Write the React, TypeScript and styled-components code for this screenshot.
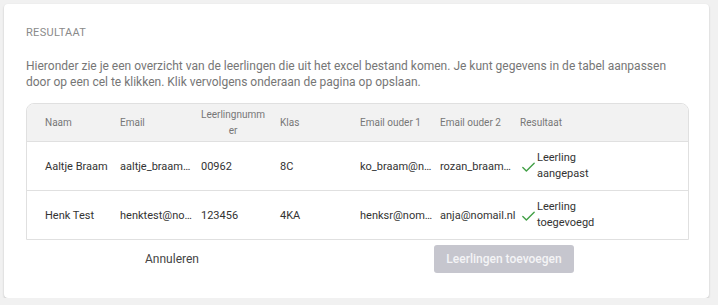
import React from 'react'
import styled, { createGlobalStyle } from 'styled-components'
import { Check } from 'lucide-react'

const GlobalStyle = createGlobalStyle`
    html, body {
        margin: 0;
        padding: 0;
        background: #f1f1f1;
        font-family: Roboto, "Liberation Sans", Arial, sans-serif;
    }
`

interface StudentRow {
    naam: string;
    email: string;
    nummer: string;
    klas: string;
    ouder1: string;
    ouder2: string;
    resultaat: string;
}

const rows: StudentRow[] = [
    {
        naam: 'Aaltje Braam',
        email: 'aaltje_braam@nomail.nl',
        nummer: '00962',
        klas: '8C',
        ouder1: 'ko_braam@nomail.nl',
        ouder2: 'rozan_braam@nomail.nl',
        resultaat: 'Leerling aangepast',
    },
    {
        naam: 'Henk Test',
        email: 'henktest@nomail.nl',
        nummer: '123456',
        klas: '4KA',
        ouder1: 'henksr@nomail.nl',
        ouder2: 'anja@nomail.nl',
        resultaat: 'Leerling toegevoegd',
    },
]

const columnWidths = [89, 81, 79, 80, 80, 80]

export default function App() {
    return (
        <>
            <GlobalStyle />
            <Card>
                <Title>Resultaat</Title>
                <Intro>
                    Hieronder zie je een overzicht van de leerlingen die uit het excel bestand komen. Je kunt gegevens in de tabel aanpassen
                    door op een cel te klikken. Klik vervolgens onderaan de pagina op opslaan.
                </Intro>
                <TableWrap>
                    <Table>
                        <colgroup>
                            {columnWidths.map((w, i) => <col key={i} style={{ width: w }} />)}
                            <col />
                        </colgroup>
                        <thead>
                            <tr>
                                <HeadCell>Naam</HeadCell>
                                <HeadCell>Email</HeadCell>
                                <HeadCell><Wrapped>Leerlingnummer</Wrapped></HeadCell>
                                <HeadCell>Klas</HeadCell>
                                <HeadCell>Email ouder 1</HeadCell>
                                <HeadCell>Email ouder 2</HeadCell>
                                <HeadCell>Resultaat</HeadCell>
                            </tr>
                        </thead>
                        <tbody>
                            {rows.map((row) => (
                                <tr key={row.naam}>
                                    <Cell>{row.naam}</Cell>
                                    <Cell>{row.email}</Cell>
                                    <Cell>{row.nummer}</Cell>
                                    <Cell>{row.klas}</Cell>
                                    <Cell>{row.ouder1}</Cell>
                                    <Cell>{row.ouder2}</Cell>
                                    <Cell>
                                        <Result>
                                            <Check size={17} color="#43a047" strokeWidth={2} />
                                            <ResultText>{row.resultaat}</ResultText>
                                        </Result>
                                    </Cell>
                                </tr>
                            ))}
                        </tbody>
                    </Table>
                </TableWrap>
                <Footer>
                    <CancelButton>Annuleren</CancelButton>
                    <SubmitButton disabled>Leerlingen toevoegen</SubmitButton>
                </Footer>
            </Card>
        </>
    )
}

const Card = styled.div`
    margin: 4px 9px 0 4px;
    height: 294px;
    box-sizing: border-box;
    padding: 22px 20px 0 22px;
    background: #fff;
    border-radius: 4px;
    box-shadow: 0 1px 2px rgba(0, 0, 0, 0.22);
`

const Title = styled.div`
    font-size: 11px;
    line-height: 14px;
    color: #8a8a8a;
    text-transform: uppercase;
    letter-spacing: 0.3px;
`

const Intro = styled.p`
    margin: 18px 0 0;
    font-size: 12px;
    line-height: 16px;
    color: #767676;
`

const TableWrap = styled.div`
    margin-top: 13px;
    border: 1px solid #e0e0e0;
    border-radius: 8px 8px 0 0;
    overflow: hidden;
`

const Table = styled.table`
    width: 100%;
    table-layout: fixed;
    border-collapse: collapse;
`

const HeadCell = styled.th`
    height: 37px;
    padding: 0 0 0 4px;
    background: #f2f2f2;
    font-size: 10px;
    font-weight: 400;
    line-height: 16px;
    color: #777;
    text-align: left;
    border-bottom: 1px solid #e0e0e0;

    &:first-child {
        padding-left: 18px;
    }
`

const Wrapped = styled.span`
    display: inline-block;
    width: 64px;
    text-align: center;
    word-break: break-all;
`

const Cell = styled.td`
    height: 48px;
    padding: 0 0 0 4px;
    font-size: 11px;
    color: #333;
    white-space: nowrap;
    overflow: hidden;
    text-overflow: ellipsis;
    border-bottom: 1px solid #e0e0e0;

    &:first-child {
        padding-left: 18px;
    }

    tr:last-child > & {
        border-bottom: none;
    }
`

const Result = styled.div`
    display: flex;
    align-items: center;

    svg {
        flex: none;
        margin-top: 3px;
    }
`

const ResultText = styled.span`
    width: 70px;
    white-space: normal;
    line-height: 16px;
`

const Footer = styled.div`
    display: flex;
    align-items: center;
    margin-top: 5px;
    padding-left: 96px;
`

const CancelButton = styled.button`
    width: 100px;
    height: 28px;
    border: none;
    background: none;
    font-family: inherit;
    font-size: 12px;
    color: #444;
    cursor: pointer;
`

const SubmitButton = styled.button`
    margin-left: 212px;
    width: 140px;
    height: 28px;
    border: none;
    border-radius: 3px;
    background: #c6c6ce;
    font-family: inherit;
    font-size: 12px;
    font-weight: 500;
    color: #f4f4f6;
`
